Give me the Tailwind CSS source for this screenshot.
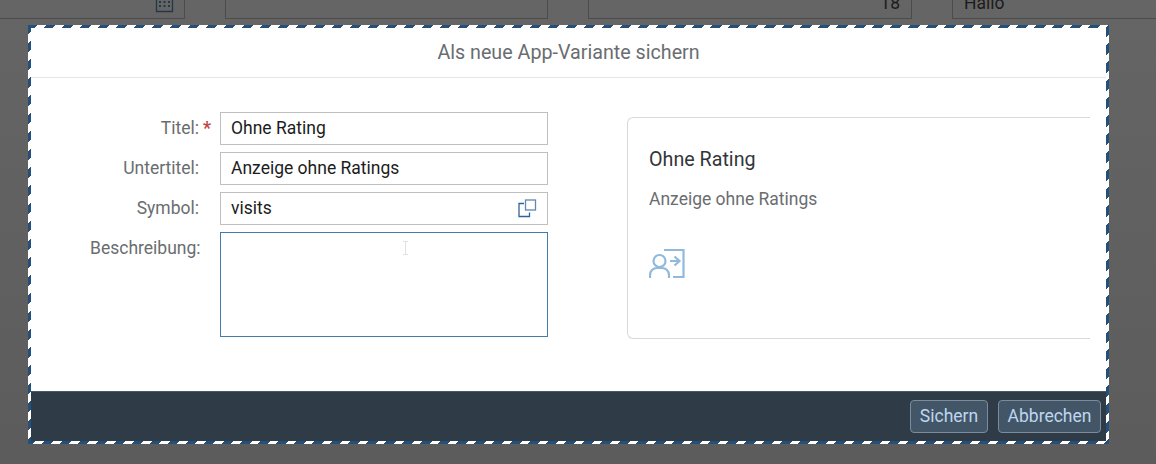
<!DOCTYPE html>
<html lang="de">
<head>
    <meta charset="UTF-8">
    <title>Als neue App-Variante sichern</title>
    <script src="https://cdn.jsdelivr.net/npm/@tailwindcss/browser@4"></script>
</head>
<body class="relative h-[464px] w-[1156px] overflow-hidden bg-gradient-to-b from-[#656565] to-[#5c5c5c] font-['Roboto',sans-serif]">

    <!-- table row behind the dialog -->
    <div class="flex h-[19px] text-[17.500px] text-[#1c1c1c]">
        <div class="relative w-[185px] border-r border-b border-[#4c4c4c]">
            <svg class="absolute left-[155px] top-[-6px]" width="19" height="19" viewBox="0 0 19 19" fill="none">
                <path d="M1.500 1v16.500h16V1" stroke="#24384c" stroke-width="1.300"/>
                <g fill="#24384c">
                    <rect x="4" y="3" width="2" height="2"/><rect x="8.500" y="3" width="2" height="2"/><rect x="13" y="3" width="2" height="2"/>
                    <rect x="4" y="7" width="2" height="2"/><rect x="8.500" y="7" width="2" height="2"/><rect x="13" y="7" width="2" height="2"/>
                    <rect x="4" y="11" width="2" height="2"/><rect x="8.500" y="11" width="2" height="2"/><rect x="13" y="11" width="2" height="2"/>
                </g>
            </svg>
        </div>
        <div class="ml-[40px] w-[323px] border-x border-b border-[#4c4c4c]"></div>
        <div class="ml-[40px] flex w-[324px] items-end justify-end overflow-hidden border-x border-b border-[#4c4c4c] pr-[11px] pb-[5px] leading-[20px]">18</div>
        <div class="ml-[40px] flex flex-1 items-end overflow-hidden border-l border-b border-[#4c4c4c] pl-[11px] pb-[5px] leading-[20px]">Hallo</div>
    </div>

    <!-- dialog -->
    <div class="absolute left-[28px] top-[25px] h-[419px] w-[1081px] bg-[repeating-linear-gradient(135deg,#25507a_0px,#25507a_7px,#ffffff_7px,#ffffff_12.730px)] p-[3px]">
        <div class="flex h-full flex-col bg-white">
            <header class="flex h-[50px] shrink-0 items-center justify-center border-b border-[#e5e5e5] pt-[1px] text-[19.700px] text-[#6a6d70]">Als neue App-Variante sichern</header>

            <div class="flex flex-1 pl-[59px] pt-[34px] text-[17.500px]">
                <div class="flex w-[458px] shrink-0 flex-col gap-[7px]">
                    <div class="flex h-[33px] items-center">
                        <label class="relative w-[109px] shrink-0 text-right text-[#6a6d70]">Titel:<span class="absolute left-[113px] top-0 font-bold text-[#c14646]">*</span></label>
                        <input class="ml-[21px] h-[33px] w-[328px] border border-[#bfbfbf] px-[10px] pb-[2px] text-[#1c1c1c] outline-none" value="Ohne Rating">
                    </div>
                    <div class="flex h-[33px] items-center">
                        <label class="w-[109px] shrink-0 text-right text-[#6a6d70]">Untertitel:</label>
                        <input class="ml-[21px] h-[33px] w-[328px] border border-[#bfbfbf] px-[10px] pb-[2px] text-[#1c1c1c] outline-none" value="Anzeige ohne Ratings">
                    </div>
                    <div class="flex h-[33px] items-center">
                        <label class="w-[109px] shrink-0 text-right text-[#6a6d70]">Symbol:</label>
                        <div class="relative ml-[21px]">
                            <input class="h-[33px] w-[328px] border border-[#bfbfbf] px-[10px] pb-[2px] text-[#1c1c1c] outline-none" value="visits">
                            <svg class="absolute right-[11px] top-[7px]" width="19" height="19" viewBox="0 0 19 19" fill="none" stroke="#2f6497" stroke-width="1.300">
                                <path d="M6 4.500H1v13h10.500v-4"/>
                                <rect x="7.500" y="1" width="10" height="10" stroke="#5f89b0"/>
                            </svg>
                        </div>
                    </div>
                    <div class="flex items-start">
                        <label class="w-[109px] shrink-0 pt-[3px] text-right text-[#6a6d70]">Beschreibung:</label>
                        <div class="relative ml-[21px]">
                            <textarea class="block h-[105px] w-[328px] resize-none border border-[#427cac] outline-none"></textarea>
                            <svg class="absolute left-[183px] top-[9px]" width="5" height="14" viewBox="0 0 5 14" fill="none" stroke="#e2e2e2">
                                <path d="M0 .5h5M2.500 .5v13M0 13.500h5"/>
                            </svg>
                        </div>
                    </div>
                </div>

                <div class="ml-[79px] mt-[5px] h-[222px] w-[463px] overflow-hidden rounded-l-[6px] border-y border-l border-[#d9d9d9] pl-[21px]">
                    <p class="mt-[28px] text-[19.700px] leading-[28px] text-[#32363a]">Ohne Rating</p>
                    <p class="mt-[13px] text-[17.500px] leading-[24px] text-[#6a6d70]">Anzeige ohne Ratings</p>
                    <svg class="mt-[37px]" width="36" height="31" viewBox="0 0 36 31" fill="none" stroke="#91b9dc" stroke-width="2.200">
                        <path d="M15 2h19.500v27H24"/>
                        <circle cx="10.500" cy="13" r="6"/>
                        <path d="M1 30v-3c0-4 3-7 7-7h5c4 0 7 3 7 7v3"/>
                        <path d="M21 13h9.500M25.500 8.500l5 4.500-5 4.500"/>
                    </svg>
                </div>
            </div>

            <footer class="flex h-[50px] shrink-0 items-center justify-end gap-[10px] border-t border-[#475766] bg-[#2f3c48] pr-[5px] pb-[1px] text-[17.500px] text-[#bfd6ee]">
                <button class="h-[33px] w-[78px] rounded-[4px] border border-[#7b8c9c] bg-[#425668]">Sichern</button>
                <button class="h-[33px] w-[103px] rounded-[4px] border border-[#7b8c9c] bg-[#425668]">Abbrechen</button>
            </footer>
        </div>
    </div>

</body>
</html>
